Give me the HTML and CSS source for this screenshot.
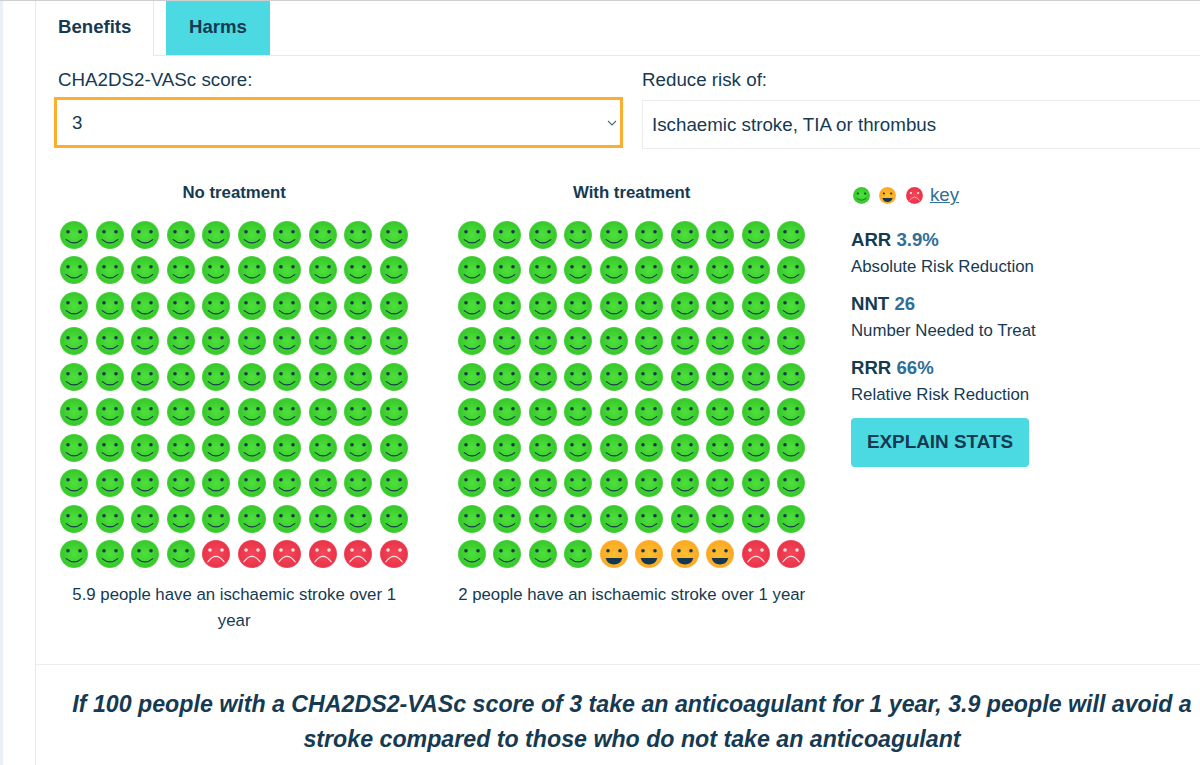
FILE: index.html
```html
<!DOCTYPE html>
<html lang="en">
    <head>
        <meta charset="UTF-8">
        <meta name="viewport" content="width=device-width, initial-scale=1.0">
        <title>Anticoagulant benefits</title>
        <link rel="stylesheet" href="styles.css">
    </head>
    <body>
        <svg class="defs" width="0" height="0" aria-hidden="true">
            <defs>
                <radialGradient id="grad-green">
                    <stop offset="0" stop-color="#4ee03a"/>
                    <stop offset="0.9" stop-color="#38ca2c"/>
                    <stop offset="1" stop-color="#55d24a"/>
                </radialGradient>
                <radialGradient id="grad-yellow">
                    <stop offset="0" stop-color="#ffbe2e"/>
                    <stop offset="0.9" stop-color="#fbaa26"/>
                    <stop offset="1" stop-color="#fcb840"/>
                </radialGradient>
                <radialGradient id="grad-red">
                    <stop offset="0" stop-color="#f6475a"/>
                    <stop offset="0.9" stop-color="#ea3449"/>
                    <stop offset="1" stop-color="#ee5062"/>
                </radialGradient>
                <symbol id="face-green" viewBox="0 0 28 28">
                    <circle cx="14" cy="14" r="14" fill="url(#grad-green)"/>
                    <circle cx="8" cy="10.7" r="1.8" fill="#15364f"/>
                    <circle cx="20" cy="10.7" r="1.8" fill="#15364f"/>
                    <path d="M6.2 18.6 Q14 25.2 21.8 18.6" fill="none" stroke="#15364f" stroke-width="1.1" stroke-linecap="round"/>
                </symbol>
                <symbol id="face-yellow" viewBox="0 0 28 28">
                    <circle cx="14" cy="14" r="14" fill="url(#grad-yellow)"/>
                    <circle cx="8" cy="10.7" r="1.8" fill="#15364f"/>
                    <circle cx="20" cy="10.7" r="1.8" fill="#15364f"/>
                    <path d="M5.6 18 H22.4 Q20.5 24.5 14 24.5 Q7.5 24.5 5.6 18 Z" fill="#15364f"/>
                </symbol>
                <symbol id="face-red" viewBox="0 0 28 28">
                    <circle cx="14" cy="14" r="14" fill="url(#grad-red)"/>
                    <circle cx="8" cy="10" r="1.8" fill="#fbe4e6"/>
                    <circle cx="20" cy="10" r="1.8" fill="#fbe4e6"/>
                    <path d="M5.8 21.8 Q14 11 22.2 21.8" fill="none" stroke="#fbe4e6" stroke-width="1.1" stroke-linecap="round"/>
                </symbol>
            </defs>
        </svg>

        <div class="panel">
            <div class="tabs">
                <div class="tab tab-active">Benefits</div>
                <div class="tab tab-other">Harms</div>
            </div>

            <div class="filters">
                <div class="filter filter-score">
                    <label for="score">CHA2DS2-VASc score:</label>
                    <div class="select-wrap">
                        <select id="score" class="select select-focus">
                            <option>3</option>
                        </select>
                        <svg class="chevron" width="10" height="6" viewBox="0 0 10 6"><path d="M1 1 L5 5 L9 1" fill="none" stroke="#4a6679" stroke-width="1.1"/></svg>
                    </div>
                </div>
                <div class="filter filter-risk">
                    <label for="risk">Reduce risk of:</label>
                    <div class="select-wrap">
                        <select id="risk" class="select">
                            <option>Ischaemic stroke, TIA or thrombus</option>
                        </select>
                    </div>
                </div>
            </div>

            <div class="results">
                <div class="chart">
                    <h4>No treatment</h4>
                    <div class="faces" data-green="94" data-yellow="0" data-red="6"></div>
                    <p>5.9 people have an ischaemic stroke over 1 year</p>
                </div>
                <div class="chart">
                    <h4>With treatment</h4>
                    <div class="faces" data-green="94" data-yellow="4" data-red="2"></div>
                    <p>2 people have an ischaemic stroke over 1 year</p>
                </div>
                <div class="stats">
                    <div class="key">
                        <svg class="key-face"><use href="#face-green"/></svg>
                        <svg class="key-face"><use href="#face-yellow"/></svg>
                        <svg class="key-face"><use href="#face-red"/></svg>
                        <a href="#">key</a>
                    </div>
                    <div class="stat">
                        <div class="stat-head">ARR <span>3.9%</span></div>
                        <div class="stat-name">Absolute Risk Reduction</div>
                    </div>
                    <div class="stat">
                        <div class="stat-head">NNT <span>26</span></div>
                        <div class="stat-name">Number Needed to Treat</div>
                    </div>
                    <div class="stat">
                        <div class="stat-head">RRR <span>66%</span></div>
                        <div class="stat-name">Relative Risk Reduction</div>
                    </div>
                    <button class="explain">EXPLAIN STATS</button>
                </div>
            </div>

            <div class="summary">
                If 100 people with a CHA2DS2-VASc score of 3 take an anticoagulant for 1 year, 3.9 people will avoid a stroke compared to those who do not take an anticoagulant
            </div>
        </div>
        <script src="script.js"></script>
    </body>
</html>
```

FILE: styles.css
```css
html, body {
    margin: 0;
    padding: 0;
    height: 765px;
    overflow: hidden;
}
body {
    font-family: "Liberation Sans", Arial, sans-serif;
    color: #153a52;
    background-color: #fff;
    border-top: 1px solid #cfcfcf;
    box-sizing: border-box;
    padding-left: 3px;
    position: relative;
}
body::before {
    content: "";
    position: absolute;
    left: 0;
    top: 0;
    bottom: 0;
    width: 3px;
    background-color: #e9f0f6;
}
.defs {
    position: absolute;
}
.panel {
    width: 1192px;
    min-height: 764px;
    margin-left: 32px;
    border-left: 1px solid #e8e8e8;
}
.tabs {
    display: flex;
    height: 54px;
    border-bottom: 1px solid #e8e8e8;
}
.tab {
    font-size: 18.6px;
    font-weight: bold;
    line-height: 52px;
}
.tab-active {
    width: 95px;
    padding-left: 22px;
    height: 55px;
    background-color: #fff;
    border-right: 1px solid #e8e8e8;
}
.tab-other {
    margin-left: 12px;
    padding: 0 23px;
    height: 54px;
    background-color: #4bd9e2;
}
.filters {
    display: flex;
    margin-top: 13px;
}
.filter {
    flex: none;
}
.filter label {
    display: block;
    font-size: 18.75px;
    line-height: 22px;
    margin-left: 4px;
    margin-bottom: 9px;
}
.filter-score {
    width: 569px;
    margin-left: 18px;
}
.filter-score label {
    margin-bottom: 6px;
}
.filter-risk {
    width: 600px;
    margin-left: 19px;
}
.filter-risk label {
    margin-left: 0;
}
.select-wrap {
    position: relative;
}
.select {
    display: block;
    width: 100%;
    height: 49px;
    padding: 0 9px;
    font-family: inherit;
    font-size: 18.75px;
    color: #153a52;
    background-color: #fff;
    border: 1px solid #ececec;
    border-radius: 0;
    appearance: none;
    outline: none;
}
.select-focus {
    height: 51px;
    padding: 0 15px;
    border: 3px solid #fbae2f;
}
.chevron {
    position: absolute;
    right: 6px;
    top: 23px;
}
.results {
    display: flex;
    margin-top: 34px;
    margin-left: 20.7px;
}
.chart {
    width: 355px;
    margin-right: 42.5px;
}
.chart h4 {
    margin: 0 0 14px;
    font-size: 16.8px;
    line-height: 20px;
    text-align: center;
}
.chart p {
    margin: 9.5px 0 0;
    font-size: 16.8px;
    line-height: 26px;
    text-align: center;
}
.faces {
    display: grid;
    grid-template-columns: repeat(10, 35.5px);
    grid-auto-rows: 35.5px;
}
.face {
    width: 28px;
    height: 28px;
    margin: 3.75px;
    display: block;
}
.stats {
    margin-left: -0.7px;
}
.key {
    display: flex;
    align-items: center;
    height: 24px;
    margin-bottom: 20px;
}
.key-face {
    width: 17px;
    height: 17px;
    margin-left: 2px;
    margin-right: 7.3px;
}
.key a {
    font-size: 18.75px;
    color: #2f7098;
}
.stat {
    margin-bottom: 11px;
}
.stat-head {
    font-size: 18.6px;
    font-weight: bold;
    line-height: 26px;
}
.stat-head span {
    color: #2f7098;
}
.stat-name {
    padding-top: 1px;
    font-size: 16.8px;
    line-height: 26px;
}
.explain {
    display: block;
    width: 178px;
    height: 49px;
    margin-top: -1px;
    padding-bottom: 2px;
    font-family: inherit;
    font-size: 18.9px;
    font-weight: bold;
    color: #153a52;
    background-color: #4bd9e2;
    border: 0;
    border-radius: 4px;
}
.summary {
    margin-top: 30px;
    padding: 22px 30px 0;
    border-top: 1px solid #ececec;
    font-size: 23.2px;
    line-height: 35px;
    font-weight: bold;
    font-style: italic;
    text-align: center;
}
```

FILE: script.js
```js
// fill each chart with its 100 smileys, row by row
var NS = "http://www.w3.org/2000/svg";

function addFace(parent, colour) {
    var svg = document.createElementNS(NS, "svg");
    svg.setAttribute("class", "face");
    var use = document.createElementNS(NS, "use");
    use.setAttribute("href", "#face-" + colour);
    svg.appendChild(use);
    parent.appendChild(svg);
}

document.querySelectorAll(".faces").forEach(function (box) {
    ["green", "yellow", "red"].forEach(function (colour) {
        var count = parseInt(box.dataset[colour], 10);
        for (var i = 0; i < count; i++) {
            addFace(box, colour);
        }
    });
});
```
